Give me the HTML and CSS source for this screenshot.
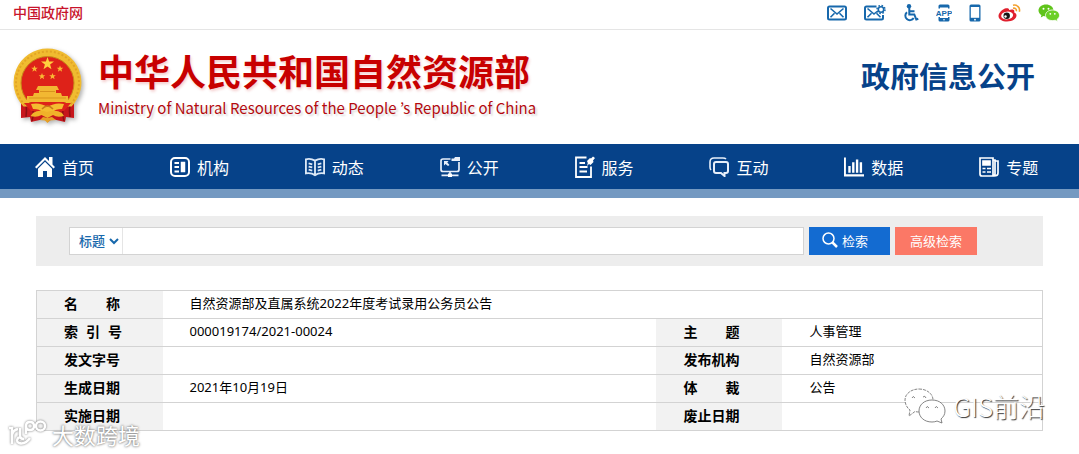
FILE: index.html
```html
<!DOCTYPE html>
<html lang="zh-CN">
<head>
  <meta charset="UTF-8">
  <meta name="viewport" content="width=device-width, initial-scale=1.0">
  <title>政府信息公开</title>
  <link rel="stylesheet" href="styles.css">
</head>
<body>

  <div class="topbar">
    <a class="gov-link" href="#">中国政府网</a>
    <div class="top-icons">
      <a href="#" aria-label="邮箱">
        <svg width="20" height="18" viewBox="0 0 20 18" fill="none" stroke="#1768ac" stroke-width="2"><rect x="1" y="2.500" width="18" height="13" rx="1.500"/><path d="M3.500 4.500 10 10l6.500-5.500M3.500 13.200l4-4M16.500 13.200l-4-4" stroke-width="1.600"/></svg>
      </a>
      <a href="#" aria-label="邮件订阅">
        <svg width="22" height="18" viewBox="0 0 22 18" fill="none" stroke="#1768ac" stroke-width="2"><path d="M12.500 2.500H2.500Q1 2.500 1 4v10Q1 15.500 2.500 15.500h15q1.500 0 1.500-1.500V11"/><path d="M3.500 4.500 10 10l3-2.500M3.500 13.200l4-4M16.500 13.200l-4-4" stroke-width="1.600"/><circle cx="17" cy="5.500" r="2.700" stroke-width="1.600"/><circle cx="17" cy="5.500" r="4" stroke-width="1.500" stroke-dasharray="1.600 1.540"/></svg>
      </a>
      <a href="#" aria-label="无障碍">
        <svg width="16" height="18" viewBox="0 0 16 18" fill="none" stroke="#1768ac" stroke-width="2"><circle cx="6" cy="2.200" r="2.200" fill="#1768ac" stroke="none"/><path d="M6.300 4v6.500h5l2 5 2-.8M7 7.300h4.500"/><path d="M4 8.200A4.500 4.500 0 1 0 10.700 14" stroke-width="2"/></svg>
      </a>
      <a href="#" aria-label="APP">
        <svg width="16" height="18" viewBox="1 0 16 18"><path d="M3.500 4.500V2q0-1.500 1.500-1.500h8q1.500 0 1.500 1.500v2.500h-1.500V3.500h-8v1zM3.500 13V16q0 1.500 1.500 1.500h8q1.500 0 1.500-1.500v-3h-1.500v1h-8v-1z" fill="#1768ac"/><circle cx="9" cy="15.800" r=".8" fill="#fff"/><text class="app-text" x="9" y="12">APP</text></svg>
      </a>
      <a href="#" aria-label="手机版">
        <svg width="12" height="18" viewBox="0 0 12 18"><rect x=".5" y=".5" width="11" height="17" rx="1.500" fill="#1768ac"/><path d="M1.800 3h8.400v10.800H1.800z" fill="#fff"/><circle cx="6" cy="15.700" r=".9" fill="#fff"/></svg>
      </a>
      <a href="#" aria-label="微博">
        <svg width="23" height="18" viewBox="0 0 23 18"><path d="M8 4.200C5 4.500.5 8.700.5 12c0 3.500 4 5.500 8.500 5.500 5.500 0 9.500-3 9.500-6 0-1.900-1.300-2.700-2.400-3 .6-1.500.2-2.700-1.300-3-1.100-.3-2.500 0-3.800.6.400-1.500-.8-2.100-3-1.900z" fill="#e01f2d"/><ellipse cx="9.200" cy="11.500" rx="6" ry="3.900" fill="#fff" transform="rotate(-8 9.200 12)"/><circle cx="8.700" cy="11.800" r="3.200" fill="#151515"/><circle cx="7.500" cy="12.500" r="1.200" fill="#fff"/><path d="M15 1.200c4-1 7.500 2.700 6.300 6.500M15 4.200c2.200-.5 3.800 1 3.300 3" fill="none" stroke="#f3a02d" stroke-width="1.600"/></svg>
      </a>
      <a href="#" aria-label="微信">
        <svg width="22" height="18" viewBox="0 0 22 18"><path d="M8 .5c4.200 0 7.500 2.600 7.500 6s-3.300 6-7.500 6q-1.300 0-2.500-.4L2.800 13.500l.6-2.400C1.600 10 .5 8.400.5 6.500c0-3.400 3.300-6 7.500-6z" fill="#5fc41a"/><path d="M14.500 6c4 0 7 2.300 7 5.300 0 1.600-.9 3-2.300 4l.5 2.200-2.500-1.300q-1.200.4-2.700.4c-4 0-7-2.300-7-5.300S10.500 6 14.500 6z" fill="#6bcf26" stroke="#fff" stroke-width=".8"/><g fill="#fff"><circle cx="5.500" cy="4.800" r="1"/><circle cx="10.500" cy="4.800" r="1"/><circle cx="12.300" cy="9.800" r=".9"/><circle cx="16.800" cy="9.800" r=".9"/></g></svg>
      </a>
    </div>
  </div>

  <header class="header">
    <a class="brand" href="#">
      <svg class="emblem" width="70" height="76" viewBox="0 0 70 76">
        <path d="M8 50 8 70l9-1 1 5 13-3 4 3 4-3 13 3 1-5 8 1V50z" fill="#c7161c"/>
        <path d="M13 55q1 8 0 14M20 60q1 7-1 13M57 55q-1 8 0 14M50 60q-1 7 1 13" fill="none" stroke="#8e0f12" stroke-width="1.500"/>
        <path d="M34.500.5a34 34 0 0 1 24 58h-48a34 34 0 0 1 24-58z" fill="#f0bb30"/>
        <path d="M12 57a31.500 31.500 0 1 1 45 0" fill="none" stroke="#e2a424" stroke-width="2" stroke-dasharray="2 2"/>
        <circle cx="34.500" cy="35" r="26.500" fill="#de2219" stroke="#c78a1a"/>
        <path d="m34.500 9 1.600 4.600h4.900l-3.900 3 1.400 4.700-4-2.800-4 2.800 1.400-4.700-3.900-3h4.900z" fill="#ffcf3f"/>
        <path id="star" d="m21.500 17.500.9 2.300h2.400l-1.900 1.500.7 2.400-2.100-1.400-2.100 1.400.7-2.400-1.900-1.500h2.400z" fill="#f9b934"/>
        <use href="#star" x="25.500"/>
        <use href="#star" x="7.500" y="7.500"/>
        <use href="#star" x="18" y="7.500"/>
        <path d="M25 38h19l2 4H23zM26 42h17v3H26zM21 45h27l1 3H20zM14 48h41v6H14z" fill="#f2b832"/>
        <path d="M27 43.500h15M16 50h37" stroke="#d9931d"/>
        <path d="M11 55h47l-7 8H18z" fill="#de2219"/>
        <path d="M18 56q9-2 16.500 3 7.500-5 16.500-3l-2 5q-7 0-9 3H29q-2-3-9-3z" fill="#f4bd30"/>
        <path d="M20 65q6-4 14-1 9-3 15 1l2 3q-7 2-11-1l-5.500 3-6-3q-5 3-11 1z" fill="#f0b229"/>
        <path d="M29 61q5.500-6 11 0" fill="none" stroke="#c97a1b" stroke-width="1.500"/>
        <path d="m27 72 3-3 4.500 1 4.500-1 4 3-6 .500-2.500 2.500-2.500-2.500z" fill="#e6a126"/>
      </svg>
      <span class="brand-text">
        <strong>中华人民共和国自然资源部</strong>
        <em lang="en">Ministry of Natural Resources of the People ’s Republic of China</em>
      </span>
    </a>
    <h1>政府信息公开</h1>
  </header>

  <nav class="nav">
    <a href="#">
      <svg width="20" height="20" viewBox="0 0 20 20" fill="#fff"><path d="M10 0 0 10l1.500 1.500L10 3l8.500 8.500L20 10l-2.500-2.500V0H14v4z"/><path d="M10 4.800 3 11.800V20h5v-6h4v6h5v-8.200z"/></svg>
      <span>首页</span>
    </a>
    <a href="#">
      <svg width="20" height="20" viewBox="0 0 20 20" fill="none" stroke="#fff" stroke-width="2"><rect x="1" y="1" width="18" height="18" rx="4"/><path d="M4.500 6H9M4.500 10H9M4.500 14.500H9"/><path d="M11.500 5.500h3v9h-3z" fill="#fff" stroke-width="1.500"/></svg>
      <span>机构</span>
    </a>
    <a href="#">
      <svg width="20" height="20" viewBox="0 0 22 20" fill="none" stroke="#dce8f6" stroke-width="2"><path d="M11 3Q6 0 1 1.500V17q6-1 10 2 4-3 10-2V1.500Q16 0 11 3zv16"/><path d="m4 6 4 1M4 9.500l4 1M4 13l4 1M18 6l-4 1M18 9.500l-4 1M18 13l-4 1"/></svg>
      <span>动态</span>
    </a>
    <a href="#">
      <svg width="20" height="20" viewBox="0 0 20 20" fill="none" stroke="#e7effa" stroke-width="1.700"><path d="M10.500 2H3Q1 2 1 4v8.500q0 2 2 2h14q2 0 2-2V5"/><path d="M11.500 1.500H14L15 0h5v4h-8.500z" fill="#e7effa" stroke="none"/><path d="M4 4h4.500L7.300 5.500 9.500 8 8 9 5.500 7 4 8.500z" fill="#e7effa" stroke="none"/><path d="M10 14.500V18M1.500 18.300H8M12 18.300h6.500"/><path d="M8 16.500h4V20H8z" fill="#fff" stroke="none"/></svg>
      <span>公开</span>
    </a>
    <a href="#">
      <svg width="20" height="22" viewBox="0 0 20 22" fill="none" stroke="#fff" stroke-width="1.800"><path d="M11.500 1.500H1V21h15V10.500M4.500 7H10M4.500 11h8M4.500 15.500H12"/><path d="m12 5 3-3 1 .5L18 .5 20 2l-2 2.500.5 1.500-3 3-1.500-1-2 2 .8-3z" fill="#fff" stroke="none"/></svg>
      <span>服务</span>
    </a>
    <a href="#">
      <svg width="20" height="20" viewBox="0 0 20 20" fill="none" stroke="#e7effa" stroke-width="2"><path d="M7 5h10q2 0 2 2v7q0 2-2 2h-1.500v3L12 16H7q-2 0-2-2V7q0-2 2-2z"/><path d="M2 13Q1 12 1 10V5q0-4 4-4h9q2 0 3 1" stroke-width="1.600"/></svg>
      <span>互动</span>
    </a>
    <a href="#">
      <svg width="20" height="20" viewBox="0 0 21 20" fill="#fff"><path d="M0 0h2v17.500h19V20H0zM4.500 9H7v7H4.500zM8.500 5H11v11H8.500zM12.500 2H15v14h-2.500zM16.500 5H19v11h-2.500z"/></svg>
      <span>数据</span>
    </a>
    <a href="#">
      <svg width="20" height="20" viewBox="0 0 20 20" fill="none" stroke="#fff" stroke-width="1.700"><path d="M1 1h13v18H3q-2 0-2-2zM14 3h2v14q0 2-2 2M16 4h3v12q0 3-4 3"/><path d="M4 4h7v4H4z" fill="#fff"/><path d="M3.500 11.500h3M8 11.500h4M3.500 15h3M8 15h4"/></svg>
      <span>专题</span>
    </a>
  </nav>

  <main class="main">
    <form class="search" onsubmit="return false">
      <div class="search-box">
        <select aria-label="检索范围">
          <option>标题</option>
          <option>正文</option>
        </select>
        <input type="text" aria-label="检索词">
      </div>
      <button class="btn btn-search" type="submit">
        <svg width="16" height="16" viewBox="0 0 16 16" fill="none" stroke="#fff"><circle cx="6.500" cy="6.500" r="5.500" stroke-width="1.500"/><path d="m10.500 10.500 4.500 4.500" stroke-width="2.500"/></svg>
        <span>检索</span>
      </button>
      <button class="btn btn-advanced" type="button">高级检索</button>
    </form>

    <table class="info">
      <colgroup>
        <col class="col-label">
        <col>
        <col class="col-label">
        <col class="col-side">
      </colgroup>
      <tr>
        <th><span>名</span><span>称</span></th>
        <td colspan="3">自然资源部及直属系统2022年度考试录用公务员公告</td>
      </tr>
      <tr>
        <th><span>索</span><span>引</span><span>号</span></th>
        <td>000019174/2021-00024</td>
        <th><span>主</span><span>题</span></th>
        <td>人事管理</td>
      </tr>
      <tr>
        <th>发文字号</th>
        <td></td>
        <th>发布机构</th>
        <td>自然资源部</td>
      </tr>
      <tr>
        <th>生成日期</th>
        <td>2021年10月19日</td>
        <th><span>体</span><span>裁</span></th>
        <td>公告</td>
      </tr>
      <tr>
        <th>实施日期</th>
        <td></td>
        <th>废止日期</th>
        <td></td>
      </tr>
    </table>
  </main>

  <div class="mark mark-left">
    <svg width="40" height="28" viewBox="0 0 40 28" fill="none" stroke="#fff" stroke-width="2.500"><path d="M1 8h3v16M4 15q1-5 6-6M12 8v7q0 4 4 4M11 17q-4 4 0 6 6 2 11-5"/><path d="M18 14V6q0-4 4-4t4 4-4 4-4-4"/><circle cx="32.500" cy="6" r="4.500"/></svg>
    <span>大数跨境</span>
  </div>
  <div class="mark mark-right">
    <svg width="42" height="36" viewBox="0 0 42 36" fill="#fff" stroke="#666" stroke-width=".8"><path d="M15 1c8 0 14 5 14 11s-6 12-14 12q-2 0-4-.5L5 28l1-6c-3-2-5-6-5-10C1 6 7 1 15 1z" stroke-dasharray="3 1"/><path d="M28 12c8 0 13 5 13 11 0 4-2 6-4 8l1 4-5-2q-2 1-5 1c-8 0-13-5-13-11s5-11 13-11z"/><g fill="none"><path d="M8 10q1-3 3 0M19 9q2-2 3 1M22 20q1-3 3 0M31 20q1-3 3 0"/></g></svg>
    <span>GIS前沿</span>
  </div>

</body>
</html>
```

FILE: styles.css
```css
* {
  box-sizing: border-box;
}
body {
  margin: 0;
  min-height: 100vh;
  position: relative;
  font-family: "Noto Sans", "Noto Sans CJK SC", sans-serif;
  font-size: 13px;
  color: #000;
  background: #fff;
}
a {
  color: inherit;
  text-decoration: none;
}
svg {
  display: block;
  flex: none;
}

/* top bar */
.topbar {
  display: flex;
  justify-content: space-between;
  height: 30px;
  padding: 0 19px 0 13px;
  border-bottom: 1px solid #e5e5e5;
}
.gov-link {
  font-size: 14px;
  line-height: 26px;
  font-weight: 500;
  color: #c8142c;
}
.top-icons {
  display: flex;
  gap: 17px;
  padding-top: 4px;
}
.app-text {
  font: bold 8px "Liberation Sans", sans-serif;
  text-anchor: middle;
  fill: #1768ac;
}

/* header */
.header {
  display: flex;
  justify-content: space-between;
  height: 114px;
  padding: 18px 44px 0 13px;
}
.brand {
  display: flex;
  gap: 15px;
}
.emblem {
  filter: drop-shadow(2px 2px 2px rgba(0, 0, 0, 0.3));
}
.brand-text {
  display: flex;
  flex-direction: column;
  color: #c80000;
}
.brand-text strong {
  font-size: 36px;
  line-height: 50px;
  font-weight: 700;
  text-shadow: 1px 2px 3px rgba(200, 0, 0, 0.2);
}
.brand-text em {
  font-family: "Noto Sans CJK KR", sans-serif;
  font-size: 15px;
  line-height: 20px;
  font-style: normal;
  color: #b40a0e;
  text-shadow: 2px 2px 2px rgba(0, 0, 0, 0.15);
}
.header h1 {
  margin: 0;
  font-size: 29px;
  line-height: 58px;
  color: #064289;
}

/* navigation */
.nav {
  display: flex;
  height: 54px;
  background: #064289;
  border-bottom: 9px solid #7499c1;
}
.nav a {
  flex: 1;
  display: flex;
  align-items: center;
  gap: 7px;
  padding-left: 35px;
  font-size: 16px;
  color: #fff;
}

.main {
  padding: 18px 36px 0;
}

/* search */
.search {
  display: flex;
  align-items: flex-start;
  gap: 5px;
  height: 50px;
  padding: 11px 66px 0 33px;
  background: #ededed;
}
.search-box {
  flex: 1;
  display: flex;
  height: 28px;
  border: 1px solid #d3d3d3;
  background: #fff;
}
.search-box select {
  width: 53px;
  padding: 0 0 0 5px;
  border: 0;
  border-right: 1px solid #e5e5e5;
  border-radius: 0;
  background: #fff;
  font: 500 13px "Noto Sans", "Noto Sans CJK SC", sans-serif;
  color: #1768ac;
}
.search-box input {
  flex: 1;
  min-width: 0;
  padding: 0 8px;
  border: 0;
  font: inherit;
}
.btn {
  display: flex;
  align-items: center;
  justify-content: center;
  gap: 4px;
  height: 28px;
  padding: 0 0 2px;
  border: 0;
  font: 13px "Noto Sans", "Noto Sans CJK SC", sans-serif;
  color: #fff;
  cursor: pointer;
}
.btn-search {
  width: 81px;
  padding-right: 9px;
  background: #136bd1;
}
.btn-advanced {
  width: 82px;
  background: #fb7866;
}

/* document info */
.info {
  width: 100%;
  margin-top: 24px;
  table-layout: fixed;
  border-collapse: collapse;
  border: 1px solid #d3d3d3;
}
.info tr {
  height: 28px;
  border-bottom: 1px solid #d3d3d3;
}
.info th,
.info td {
  padding: 0 0 0 27px;
  line-height: 25px;
  text-align: left;
  vertical-align: top;
}
.info th {
  background: #f2f2f2;
  font-size: 14px;
  white-space: nowrap;
}
.info th span {
  display: inline-block;
}
.info th span + span {
  margin-left: 8px;
}
.info th span:nth-child(2):last-child {
  margin-left: 28px;
}
.col-label {
  width: 126px;
}
.col-side {
  width: 260px;
}

/* watermarks over the page */
.mark {
  position: absolute;
  display: flex;
  align-items: center;
  font-family: "Noto Sans CJK SC", sans-serif;
  color: #fff;
}
.mark-left {
  left: 8px;
  top: 420px;
  gap: 4px;
  font-size: 22px;
  line-height: 22px;
  text-shadow: 0 0 2px #777, 0 0 3px #999;
}
.mark-left svg {
  filter: drop-shadow(0 0 1px #777);
}
.mark-right {
  right: 34px;
  top: 388px;
  gap: 7px;
  font-size: 26px;
  line-height: 36px;
  font-weight: 300;
  text-shadow: 1px 1px 1px #333;
}
```
